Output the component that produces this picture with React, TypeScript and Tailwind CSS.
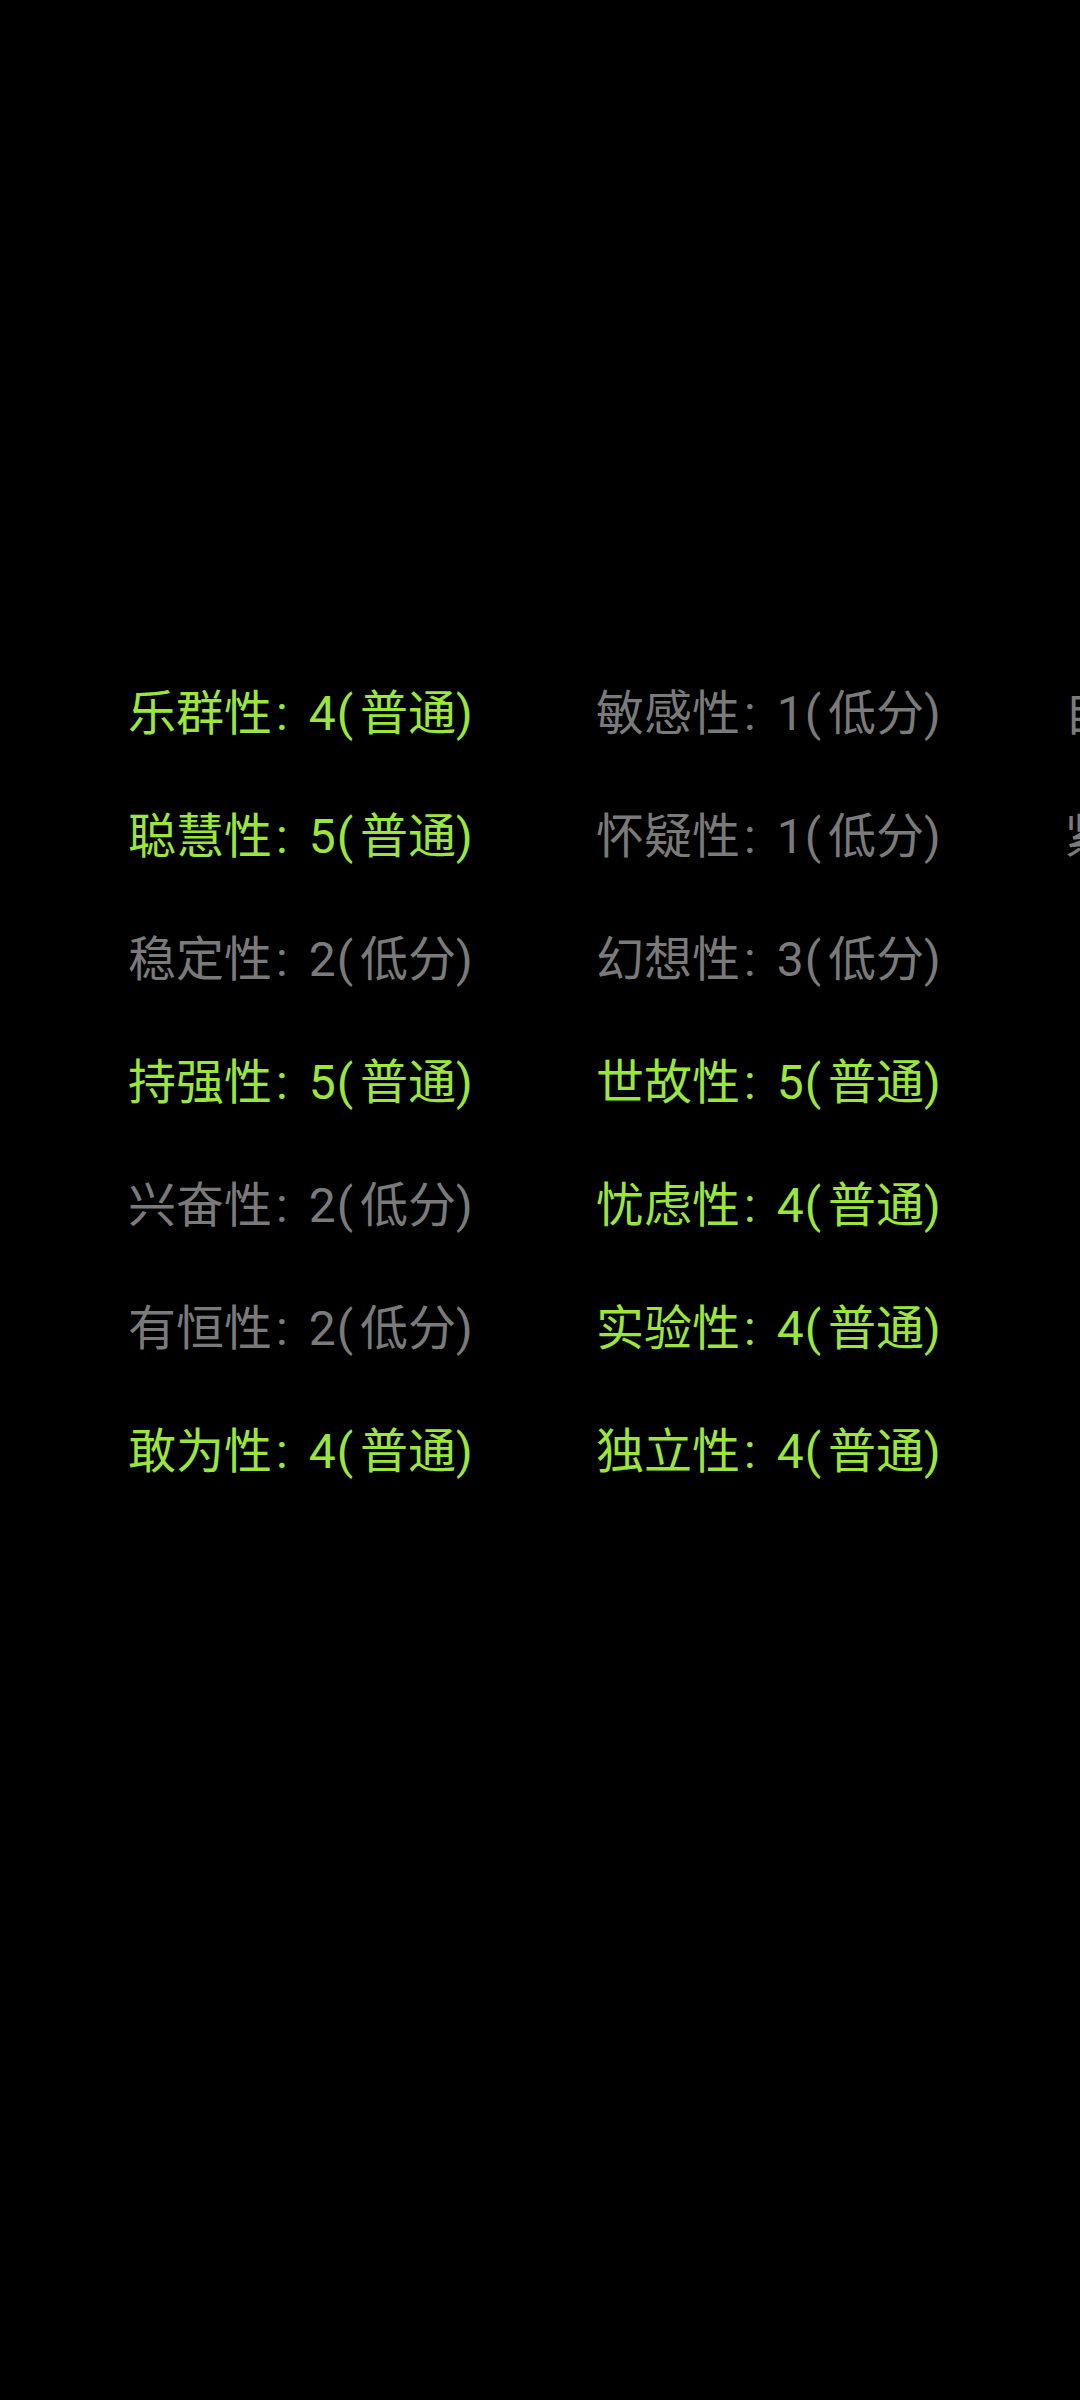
const columns = [
  [
    { name: "乐群性", score: 4, level: "普通" },
    { name: "聪慧性", score: 5, level: "普通" },
    { name: "稳定性", score: 2, level: "低分" },
    { name: "持强性", score: 5, level: "普通" },
    { name: "兴奋性", score: 2, level: "低分" },
    { name: "有恒性", score: 2, level: "低分" },
    { name: "敢为性", score: 4, level: "普通" },
  ],
  [
    { name: "敏感性", score: 1, level: "低分" },
    { name: "怀疑性", score: 1, level: "低分" },
    { name: "幻想性", score: 3, level: "低分" },
    { name: "世故性", score: 5, level: "普通" },
    { name: "忧虑性", score: 4, level: "普通" },
    { name: "实验性", score: 4, level: "普通" },
    { name: "独立性", score: 4, level: "普通" },
  ],
  [
    { name: "自律性", score: 2, level: "低分" },
    { name: "紧张性", score: 1, level: "低分" },
  ],
];

export default function App() {
  return (
    <div
      className="w-[1080px] h-[2400px] bg-black overflow-hidden"
      style={{ fontFamily: 'Roboto, "Noto Sans CJK SC", sans-serif' }}
    >
      <div className="flex pt-[652px] pl-[128px]">
        {columns.map((col, i) => (
          <div key={i} className="w-[468px] shrink-0 flex flex-col">
            {col.map((item) => (
              <div
                key={item.name}
                className={
                  "h-[123px] flex items-center text-[48px] whitespace-nowrap " +
                  (item.level === "普通" ? "text-[#9ae63a]" : "text-[#7a7a7a]")
                }
              >
                <span>{item.name}</span>
                <span className="pl-[4px] pr-[21px]">:</span>
                <span>{item.score}</span>
                <span className="pl-[1px] pr-[7px]">(</span>
                <span>{item.level}</span>
                <span>)</span>
              </div>
            ))}
          </div>
        ))}
      </div>
    </div>
  );
}
